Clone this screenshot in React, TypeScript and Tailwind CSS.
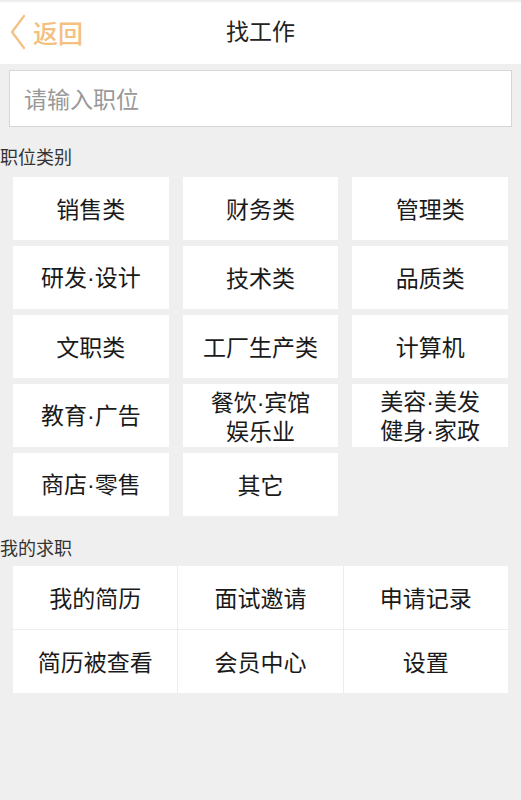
const categories: string[][] = [
  ["销售类"],
  ["财务类"],
  ["管理类"],
  ["研发·设计"],
  ["技术类"],
  ["品质类"],
  ["文职类"],
  ["工厂生产类"],
  ["计算机"],
  ["教育·广告"],
  ["餐饮·宾馆", "娱乐业"],
  ["美容·美发", "健身·家政"],
  ["商店·零售"],
  ["其它"],
];

const mine = ["我的简历", "面试邀请", "申请记录", "简历被查看", "会员中心", "设置"];

const font = { fontFamily: '"Noto Sans CJK SC", "Noto Sans", sans-serif' };

// the dot in the CJK font is full width, the picture has a narrow one
function Label({ text }: { text: string }) {
  const parts = text.split("·");
  return (
    <span className="block">
      {parts.map((p, i) => (
        <span key={i}>
          {i > 0 && <span style={{ fontFamily: '"Liberation Sans", sans-serif' }}>·</span>}
          {p}
        </span>
      ))}
    </span>
  );
}

export default function App() {
  return (
    <div className="min-h-[800px] w-full bg-[#efefef]" style={font}>
      <header className="relative flex h-16 items-center justify-center bg-white">
        <div className="absolute left-0 top-0 h-[3px] w-full bg-gradient-to-b from-[#e6e6e6] to-white" />
        <button className="absolute left-[9px] top-[14px] flex items-center gap-[6px] text-[#f4c07f]">
          <svg width="18" height="36" viewBox="0 0 18 36" fill="none">
            <path d="M15 2 L3 18 L15 34" stroke="#f4c07f" strokeWidth="2.2" strokeLinecap="round" strokeLinejoin="round" />
          </svg>
          <span className="text-[25px] font-medium leading-none">返回</span>
        </button>
        <h1 className="-mt-1 text-[23px] leading-none text-[#222]">找工作</h1>
      </header>

      <div className="px-[9px] pt-[6px]">
        <div className="flex h-[57px] items-center border border-[#d6d6d6] bg-white px-[14px]">
          <input
            className="w-full bg-transparent text-[23px] text-[#333] outline-none placeholder:text-[#999]"
            placeholder="请输入职位"
            style={font}
          />
        </div>
      </div>

      <div className="pt-[20px] text-[18px] leading-none text-[#333]">职位类别</div>
      <div className="grid grid-cols-3 gap-x-[14px] gap-y-[6px] px-[13px] pt-[12px]">
        {categories.map((lines) => (
          <div key={lines.join()} className="flex h-[63px] flex-col items-center justify-center bg-white text-[23px] leading-[27px] text-[#1a1a1a]">
            {lines.map((l) => (
              <Label key={l} text={l} />
            ))}
          </div>
        ))}
      </div>

      <div className="pt-[22px] text-[18px] leading-none text-[#333]">我的求职</div>
      <div className="mx-[13px] mt-[10px] grid grid-cols-3 gap-px bg-[#ececec]">
        {mine.map((t) => (
          <div key={t} className="flex h-[63px] items-center justify-center bg-white text-[23px] text-[#1a1a1a]">
            {t}
          </div>
        ))}
      </div>
    </div>
  );
}
